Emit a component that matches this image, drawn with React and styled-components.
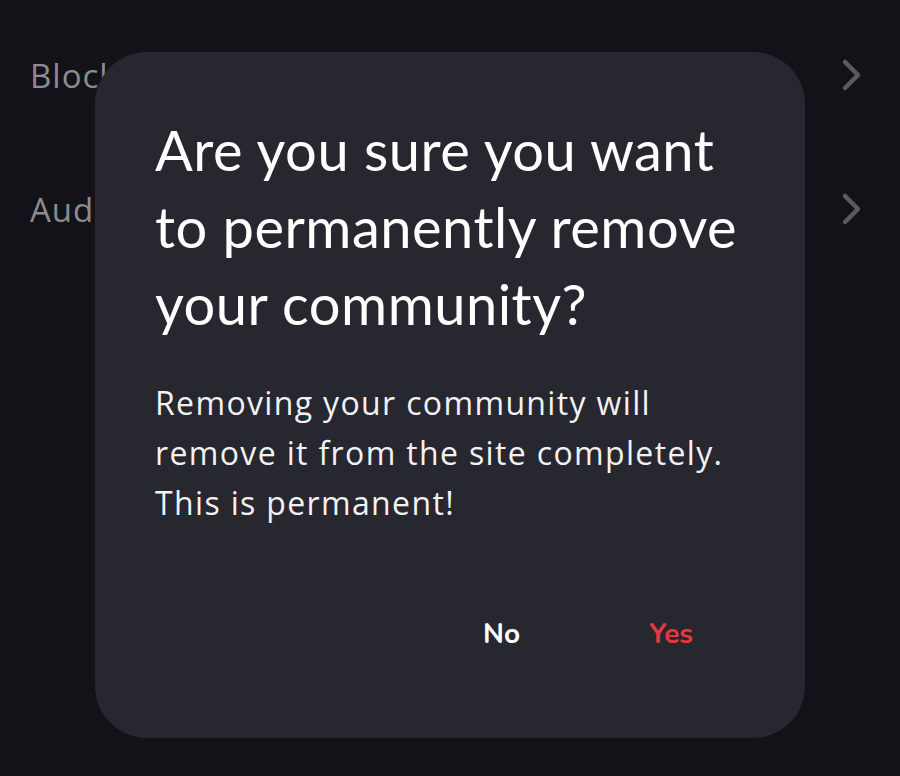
import React from "react";
import styled, { createGlobalStyle } from "styled-components";

const Global = createGlobalStyle`
  html, body {
    margin: 0;
    padding: 0;
    background: #131219;
  }
  #root {
    width: 900px;
    height: 776px;
  }
`;

const Page = styled.div`
  position: relative;
  width: 900px;
  height: 776px;
  background: #131219;
  overflow: hidden;
  font-family: "Open Sans", "Lato", sans-serif;
`;

const List = styled.div`
  display: flex;
  flex-direction: column;
  padding-top: 41px;
`;

const Row = styled.div`
  display: flex;
  align-items: center;
  justify-content: space-between;
  height: 68px;
  margin-bottom: 66px;
  padding: 0 36px 0 30px;
  color: #8c8c90;
  font-size: 33px;
  letter-spacing: 1px;
`;

const Chevron = () => (
  <svg width="24" height="36" viewBox="0 0 24 36" fill="none">
    <path
      d="M5 5 L18 18 L5 31"
      stroke="#5a5a60"
      strokeWidth="4.5"
      strokeLinecap="round"
      strokeLinejoin="round"
    />
  </svg>
);

const Backdrop = styled.div`
  position: absolute;
  inset: 0;
`;

const Dialog = styled.div`
  position: absolute;
  left: 95px;
  top: 52px;
  width: 710px;
  height: 686px;
  box-sizing: border-box;
  background: #27272f;
  border-radius: 52px;
  padding: 59px 50px 0 60px;
  display: flex;
  flex-direction: column;
`;

const Title = styled.h2`
  margin: 0;
  font-family: "Lato", sans-serif;
  font-weight: 400;
  font-size: 56px;
  line-height: 77px;
  letter-spacing: 0.5px;
  color: #ffffff;
`;

const Body = styled.p`
  margin: 36px 0 0 0;
  font-family: "Open Sans", "Lato", sans-serif;
  font-size: 32px;
  line-height: 50px;
  color: #f2f2f4;
  letter-spacing: 1.35px;
`;

const Actions = styled.div`
  display: flex;
  justify-content: flex-end;
  gap: 129px;
  margin-top: 87px;
  padding-right: 62px;
`;

const Action = styled.button`
  background: none;
  border: none;
  padding: 0;
  font-family: "Nunito", "Lato", sans-serif;
  font-weight: 700;
  font-size: 28px;
  color: ${(p) => (p.$danger ? "#e8383d" : "#ffffff")};
  cursor: pointer;
`;

export default function App() {
  return (
    <>
      <Global />
      <Page>
        <List>
          <Row>
            <span>Blocked users</span>
            <Chevron />
          </Row>
          <Row>
            <span>Audit log</span>
            <Chevron />
          </Row>
        </List>
        <Backdrop>
          <Dialog>
            <Title>
              Are you sure you want to permanently remove your community?
            </Title>
            <Body>
              Removing your community will remove it from the site
              completely. This is permanent!
            </Body>
            <Actions>
              <Action>No</Action>
              <Action $danger>Yes</Action>
            </Actions>
          </Dialog>
        </Backdrop>
      </Page>
    </>
  );
}
